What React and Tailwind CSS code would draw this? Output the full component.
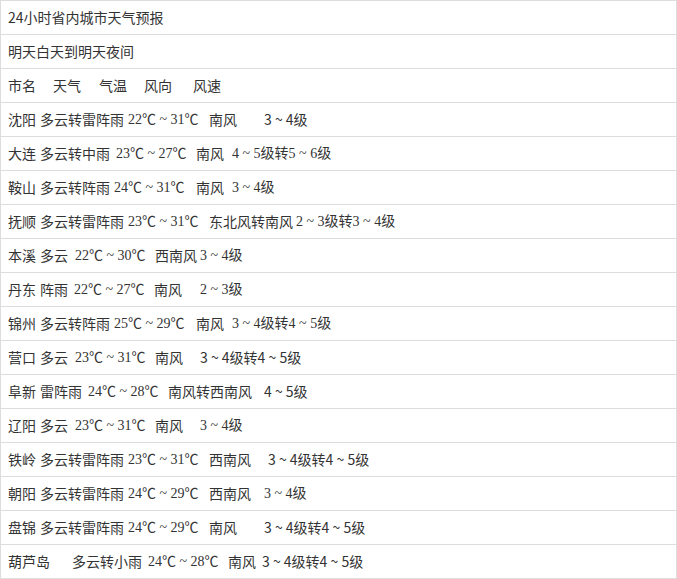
import React from "react";

const sans = "font-['Microsoft_YaHei','Noto_Sans_CJK_SC',sans-serif]";
const serif = "font-['Liberation_Serif','Noto_Sans_CJK_SC',serif]";

// [city, cityW, weather, weatherW, temp, tempW, wind, windW, speed, speedSerif]
const rows = [
  ["沈阳", 32, "多云转雷阵雨", 88, "22℃ ~ 31℃", 81, "南风", 55, "3 ~ 4级", false],
  ["大连", 32, "多云转中雨", 76, "23℃ ~ 27℃", 80, "南风", 36, "4 ~ 5级转5 ~ 6级", true],
  ["鞍山", 32, "多云转阵雨", 74, "24℃ ~ 31℃", 82, "南风", 36, "3 ~ 4级", true],
  ["抚顺", 32, "多云转雷阵雨", 88, "23℃ ~ 31℃", 81, "东北风转南风", 87, "2 ~ 3级转3 ~ 4级", true],
  ["本溪", 32, "多云", 35, "22℃ ~ 30℃", 80, "西南风", 45, "3 ~ 4级", true],
  ["丹东", 32, "阵雨", 34, "22℃ ~ 27℃", 80, "南风", 46, "2 ~ 3级", true],
  ["锦州", 32, "多云转阵雨", 74, "25℃ ~ 29℃", 82, "南风", 36, "3 ~ 4级转4 ~ 5级", true],
  ["营口", 32, "多云", 35, "23℃ ~ 31℃", 80, "南风", 45, "3 ~ 4级转4 ~ 5级", false],
  ["阜新", 32, "雷阵雨", 48, "24℃ ~ 28℃", 80, "南风转西南风", 96, "4 ~ 5级", false],
  ["辽阳", 32, "多云", 35, "23℃ ~ 31℃", 80, "南风", 45, "3 ~ 4级", true],
  ["铁岭", 32, "多云转雷阵雨", 88, "23℃ ~ 31℃", 81, "西南风", 59, "3 ~ 4级转4 ~ 5级", false],
  ["朝阳", 32, "多云转雷阵雨", 88, "24℃ ~ 29℃", 81, "西南风", 55, "3 ~ 4级", true],
  ["盘锦", 32, "多云转雷阵雨", 88, "24℃ ~ 29℃", 81, "南风", 55, "3 ~ 4级转4 ~ 5级", false],
  ["葫芦岛", 64, "多云转小雨", 76, "24℃ ~ 28℃", 80, "南风", 34, "3 ~ 4级转4 ~ 5级", false],
];

const Row = ({ children }) => (
  <div className="flex items-center h-[34px] border-t border-[#dddddd] pl-[7px] text-[14px] text-[#333333] whitespace-nowrap">
    {children}
  </div>
);

export default function App() {
  return (
    <div className={`w-[677px] bg-white border-x border-b border-[#dddddd] ${sans}`}>
      <Row>24小时省内城市天气预报</Row>
      <Row>明天白天到明天夜间</Row>
      <Row>
        <span className="w-[45px] shrink-0">市名</span>
        <span className="w-[46px] shrink-0">天气</span>
        <span className="w-[45px] shrink-0">气温</span>
        <span className="w-[49px] shrink-0">风向</span>
        <span>风速</span>
      </Row>
      {rows.map((r) => (
        <Row key={r[0]}>
          <span className="shrink-0" style={{ width: r[1] }}>{r[0]}</span>
          <span className="shrink-0" style={{ width: r[3] }}>{r[2]}</span>
          <span className={`shrink-0 ${serif}`} style={{ width: r[5] }}>{r[4]}</span>
          <span className="shrink-0" style={{ width: r[7] }}>{r[6]}</span>
          <span className={r[9] ? serif : ""}>{r[8]}</span>
        </Row>
      ))}
    </div>
  );
}
